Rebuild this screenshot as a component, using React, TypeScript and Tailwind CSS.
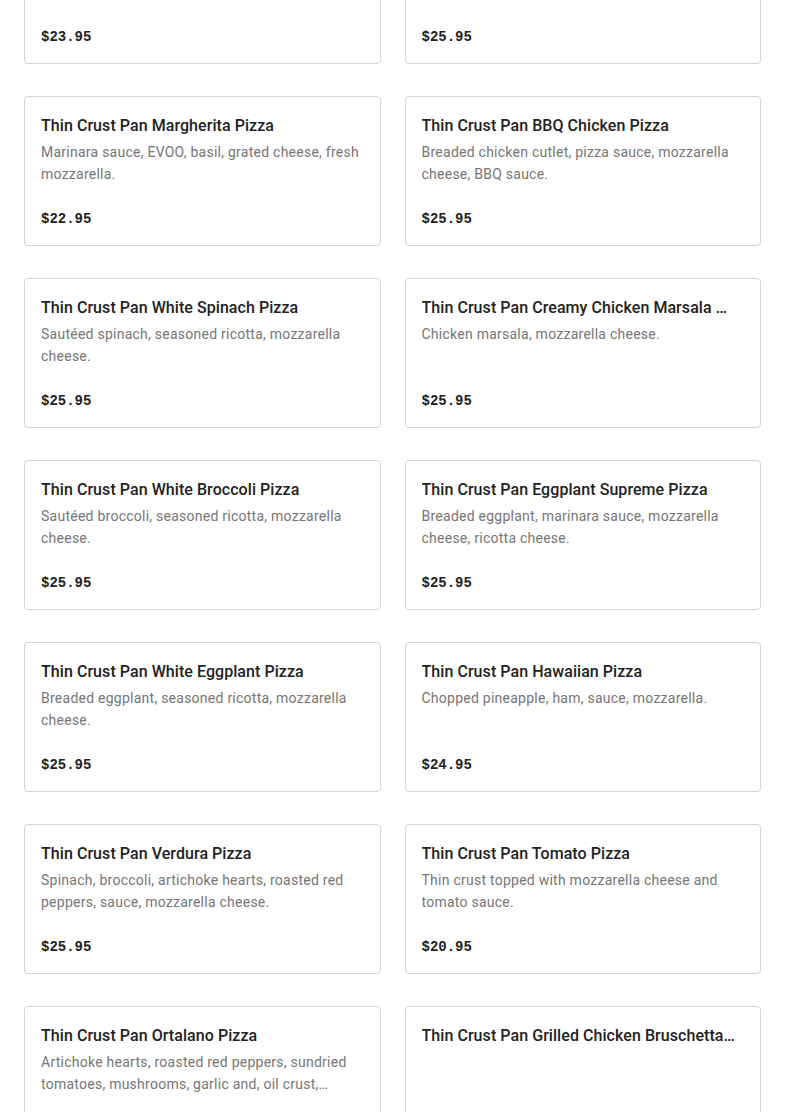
const items = [
  { name: "Thin Crust Pan Cheese Pizza", desc: "Pizza sauce, mozzarella cheese.", price: "$23.95" },
  { name: "Thin Crust Pan Buffalo Chicken Pizza", desc: "Breaded chicken cutlet, buffalo sauce, mozzarella cheese.", price: "$25.95" },
  { name: "Thin Crust Pan Margherita Pizza", desc: "Marinara sauce, EVOO, basil, grated cheese, fresh mozzarella.", price: "$22.95" },
  { name: "Thin Crust Pan BBQ Chicken Pizza", desc: "Breaded chicken cutlet, pizza sauce, mozzarella cheese, BBQ sauce.", price: "$25.95" },
  { name: "Thin Crust Pan White Spinach Pizza", desc: "Sautéed spinach, seasoned ricotta, mozzarella cheese.", price: "$25.95" },
  { name: "Thin Crust Pan Creamy Chicken Marsala Pizza", desc: "Chicken marsala, mozzarella cheese.", price: "$25.95" },
  { name: "Thin Crust Pan White Broccoli Pizza", desc: "Sautéed broccoli, seasoned ricotta, mozzarella cheese.", price: "$25.95" },
  { name: "Thin Crust Pan Eggplant Supreme Pizza", desc: "Breaded eggplant, marinara sauce, mozzarella cheese, ricotta cheese.", price: "$25.95" },
  { name: "Thin Crust Pan White Eggplant Pizza", desc: "Breaded eggplant, seasoned ricotta, mozzarella cheese.", price: "$25.95" },
  { name: "Thin Crust Pan Hawaiian Pizza", desc: "Chopped pineapple, ham, sauce, mozzarella.", price: "$24.95" },
  { name: "Thin Crust Pan Verdura Pizza", desc: "Spinach, broccoli, artichoke hearts, roasted red peppers, sauce, mozzarella cheese.", price: "$25.95" },
  { name: "Thin Crust Pan Tomato Pizza", desc: "Thin crust topped with mozzarella cheese and tomato sauce.", price: "$20.95" },
  { name: "Thin Crust Pan Ortalano Pizza", desc: "Artichoke hearts, roasted red peppers, sundried tomatoes, mushrooms, garlic and, oil crust, mozzarella cheese.", price: "$25.95" },
  { name: "Thin Crust Pan Grilled Chicken Bruschetta Pizza", desc: "", price: "$25.95" },
];

function MenuCard({ name, desc, price }: { name: string; desc: string; price: string }) {
  return (
    <div className="h-[150px] flex flex-col border border-[#d3d3d3] rounded-[4px] bg-white px-4 pt-[17px] pb-[15px]">
      <h3 className="pr-2 text-[16px] leading-6 font-medium tracking-[0.06px] text-[#222] truncate [font-family:Roboto,sans-serif]">
        {name}
      </h3>
      <p className="mt-[3px] text-[14px] leading-[22px] tracking-[0.25px] text-[#767676] line-clamp-2 [font-family:Roboto,sans-serif]">
        {desc}
      </p>
      <p className="mt-auto text-[14px] leading-[22px] font-bold text-[#222] [font-family:'Liberation_Mono',monospace]">
        {price}
      </p>
    </div>
  );
}

export default function App() {
  return (
    <div className="bg-white min-h-screen overflow-hidden">
      <div className="grid grid-cols-2 gap-x-6 gap-y-8 px-6 -mt-[86px]">
        {items.map((it) => (
          <MenuCard key={it.name} {...it} />
        ))}
      </div>
    </div>
  );
}
